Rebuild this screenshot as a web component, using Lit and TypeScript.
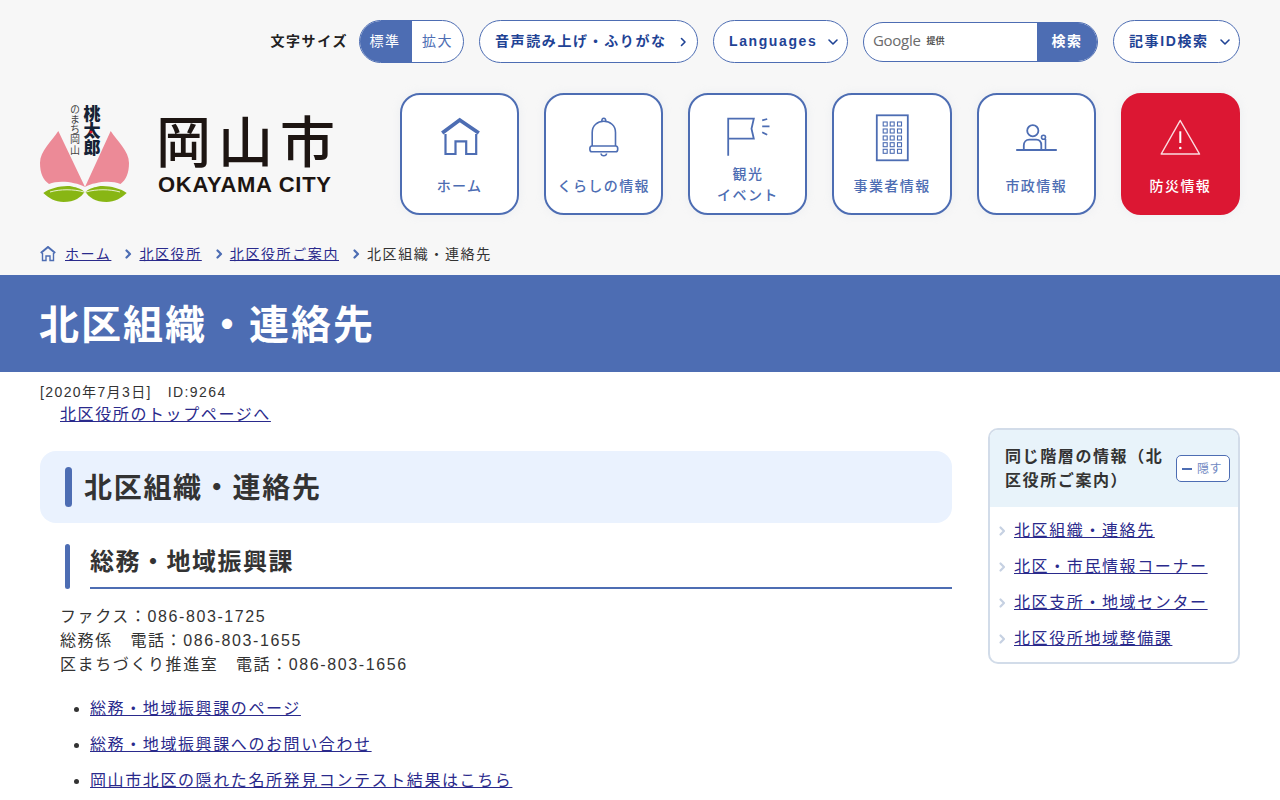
import { LitElement, html, css, svg } from "lit";
import { customElement } from "lit/decorators.js";

const chev = (cls: string, d: string) => html`<svg class=${cls} width="12" height="12" viewBox="0 0 12 12"><path d=${d} fill="none" stroke="currentColor" stroke-width="1.6" stroke-linecap="round" stroke-linejoin="round"/></svg>`;
const chevRight = "M4.500 2.500L8 6 4.500 9.500";
const chevDown = "M2 4l4 4 4-4";

const windows = [11, 18, 25, 31.7, 38.3].flatMap((y) => [23.2, 30.2, 37.5].map((x) => svg`<rect x=${x - 2} y=${y - 2} width="4" height="4"/>`));

const icons: Record<string, unknown> = {
  home: svg`<path d="M12.200 20L29.700 7 48.800 20" stroke-width="3.800" stroke-linejoin="miter"/><path d="M15.500 21v20h10V28.300h10.700V41h10V21" stroke-width="2.200"/>`,
  bell: svg`<path d="M18.200 33V19.500C18.200 12.500 23.500 8.300 29.800 8.300S41.500 12.500 41.500 19.500V33" /><path d="M27.800 8.200c0-4 4-4 4 0"/><path d="M17.800 33h24c2.600 0 2.600 5.800 0 5.800h-24c-2.600 0-2.600-5.800 0-5.800z"/><path d="M27 40.500c.4 3 5.200 3 5.600 0"/>`,
  flag: svg`<path d="M10.200 42.700V5.700H35.800L33.500 15.700 35.800 25.700H10.200" stroke-width="1.800"/><path d="M44.200 7.300L49.200 6M44.200 13.300H51.500M44.200 19.300L49.200 21.700" stroke-width="1.800"/>`,
  building: svg`<rect x="14.800" y="2.300" width="31" height="45" stroke-width="1.800"/><g stroke-width="1.100">${windows}</g>`,
  person: svg`<circle cx="26.800" cy="17.700" r="5.600" stroke-width="1.800"/><path d="M17.800 37V32.500c0-3.500 2.200-5.800 5.500-5.800h7c3.300 0 5 2.300 5 5.800V37" stroke-width="1.800"/><circle cx="37.500" cy="24.300" r="2"/><path d="M39.500 26V37"/><path d="M10.200 37H50.800" stroke-width="2"/>`,
  warn: svg`<path d="M30.200 7.500L49.500 41H11.200Z" stroke-linejoin="round" stroke-width="1.500" opacity="0.85"/><path d="M30.300 18.300V30" stroke-width="2"/><circle cx="30.300" cy="35" r="1.300" fill="currentColor" stroke="none"/>`,
};

const nav = [
  { i: "home", l: ["ホーム"] },
  { i: "bell", l: ["くらしの情報"] },
  { i: "flag", l: ["観光", "イベント"] },
  { i: "building", l: ["事業者情報"] },
  { i: "person", l: ["市政情報"] },
  { i: "warn", l: ["防災情報"], red: true },
];

const side = ["北区組織・連絡先", "北区・市民情報コーナー", "北区支所・地域センター", "北区役所地域整備課"];
const list = ["総務・地域振興課のページ", "総務・地域振興課へのお問い合わせ", "岡山市北区の隠れた名所発見コンテスト結果はこちら"];
const crumbs = ["北区役所", "北区役所ご案内"];

@customElement("app-root")
export class AppRoot extends LitElement {
  static styles = css`
    :host {
      display: block;
      height: 800px;
      overflow: hidden;
      background: #fff;
      color: #333;
      font-family: "Liberation Sans", "Noto Sans CJK JP", sans-serif;
      font-size: 16px;
      letter-spacing: 1.6px;
      line-height: 24px;
    }
    a { color: #2a2a8c; text-decoration: underline; }
    header { background: #f7f7f7; height: 275px; padding: 20px 40px 0; box-sizing: border-box; }
    .tools { display: flex; justify-content: flex-end; align-items: center; gap: 15px; height: 43px; font-size: 14px; }
    .tools .lbl { font-weight: 700; color: #222; margin-right: -4px; padding-bottom: 2px; }
    .toggle { display: flex; width: 105px; height: 43px; box-sizing: border-box; border: 1px solid #4d6db3; border-radius: 22px; overflow: hidden; background: #fff; color: #4d6db3; }
    .toggle span { display: flex; align-items: center; justify-content: center; flex: 1; padding-bottom: 2px; }
    .toggle .on { background: #4d6db3; color: #fff; flex: 0 0 52px; padding-right: 2px; box-sizing: border-box; }
    .pill { display: flex; align-items: center; justify-content: space-between; box-sizing: border-box; height: 43px; border: 1px solid #4d6db3; border-radius: 22px; background: #fff; color: #1f4395; font-weight: 700; padding: 0 8px 0 15px; }
    .pill span { padding-bottom: 2px; }
    .pill svg { flex: none; }
    .p1 { width: 219px; }
    .p2 { width: 135px; }
    .p3 { width: 127px; }
    .search { display: flex; width: 235px; height: 40px; box-sizing: border-box; border: 1px solid #4d6db3; border-radius: 20px; overflow: hidden; background: #fff; }
    .search .g { flex: 1; display: flex; align-items: center; gap: 6px; padding-left: 9px; padding-bottom: 2px; letter-spacing: 0; color: #6b6b6b; }
    .search .g b { font: 400 15px/1 "Open Sans", sans-serif; letter-spacing: -0.3px; }
    .search .g i { font: 700 9px/1 "Noto Sans CJK JP", sans-serif; color: #555; }
    .search .btn { flex: 0 0 60px; background: #4d6db3; color: #fff; font-weight: 700; display: flex; align-items: center; justify-content: center; padding-bottom: 2px; }
    .mid { display: flex; justify-content: space-between; margin-top: 30px; height: 122px; }
    .logo { display: block; overflow: visible; }
    .logo .v { writing-mode: vertical-rl; font-family: "Noto Sans CJK JP", sans-serif; }
    .nav { display: grid; grid-template-columns: repeat(6, 1fr); column-gap: 25px; width: 840px; }
    .card { box-sizing: border-box; display: flex; flex-direction: column; align-items: center; height: 122px; border: 2px solid #4d6db3; border-radius: 20px; background: #fff; color: #4d6db3; box-shadow: 0 0 10px rgba(200, 210, 225, 0.22); font-size: 14px; letter-spacing: 1.4px; line-height: 21px; padding-top: 18px; font-weight: 500; }
    .card.red { background: #dc1733; border-color: #dc1733; color: #fff; }
    .card svg { display: block; flex: none; fill: none; stroke: currentColor; stroke-width: 1.6; }
    .card .lab { height: 42px; margin-top: 2px; display: flex; flex-direction: column; justify-content: center; text-align: center; }
    .card .lab.two { margin-top: 1px; }
    .crumb { display: flex; align-items: center; margin-top: 27px; height: 24px; font-size: 14px; color: #333; }
    .crumb .hm { color: #4d6db3; margin-right: 9px; display: block; }
    .crumb .sep { color: #4d6db3; margin: 0 5px 0 11px; flex: none; stroke-width: 2; }
    .crumb .sep path, .side li svg path { stroke-width: 2.200; }
    .band { background: #4d6db3; color: #fff; height: 97px; padding: 2px 39px 0; box-sizing: border-box; display: flex; align-items: center; font-size: 40px; font-weight: 700; letter-spacing: 2px; line-height: 1.2; }
    .band h1 { margin: 0; font: inherit; }
    .content { padding: 10px 40px 0; }
    .date { font-size: 14px; letter-spacing: 1.4px; line-height: 21px; }
    .top { padding-left: 20px; }
    .cols { display: grid; grid-template-columns: 912px 252px; column-gap: 36px; margin-top: -1px; }
    .main { padding-top: 25px; }
    .h2 { display: flex; align-items: center; gap: 12px; height: 72px; box-sizing: border-box; padding-left: 25px; border-radius: 16px; background: #eaf2fe; font-size: 28px; font-weight: 700; letter-spacing: 1.7px; margin: 0; line-height: 40px; }
    .h2::before { content: ""; width: 7px; height: 40px; border-radius: 4px; background: #4d6db3; }
    .h2 span { padding-top: 3px; }
    .h3 { display: flex; gap: 20px; margin: 21px 0 0 25px; height: 45px; font-size: 24px; font-weight: 700; letter-spacing: 1.5px; }
    .h3::before { content: ""; width: 5px; border-radius: 3px; background: #4d6db3; }
    .h3 span { flex: 1; border-bottom: 2px solid #4d6db3; line-height: 35px; }
    .body { margin: 16px 0 0 20px; }
    ul { margin: 14px 0 0; padding: 0 0 0 50px; }
    li { padding: 6px 0; }
    .side { margin-top: 2px; height: 236px; box-sizing: border-box; border: 2px solid #d2dce9; border-radius: 10px; background: #fff; overflow: hidden; }
    .side .hd { display: flex; align-items: center; justify-content: space-between; height: 77px; box-sizing: border-box; padding: 0 8px 0 15px; background: #e8f3fa; }
    .side .hd b { width: 168px; font-weight: 700; color: #333; }
    .hide { flex: none; box-sizing: border-box; width: 54px; height: 27px; display: flex; align-items: center; gap: 5px; padding-left: 5px; border: 1px solid #4d6db3; border-radius: 5px; background: #fff; color: #6f88c2; font-size: 12px; letter-spacing: 0.6px; }
    .hide::before { content: ""; width: 10px; height: 2px; background: #4d6db3; flex: none; }
    .side ul { list-style: none; margin: 0; padding: 6px 0 0 6px; }
    .side li { display: flex; align-items: center; gap: 6px; }
    .side li svg { color: #c6d1e2; flex: none; }
  `;

  render() {
    return html`
      <header>
        <div class="tools">
          <span class="lbl">文字サイズ</span>
          <div class="toggle"><span class="on">標準</span><span>拡大</span></div>
          <div class="pill p1"><span>音声読み上げ・ふりがな</span>${chev("", chevRight)}</div>
          <div class="pill p2"><span>Languages</span>${chev("", chevDown)}</div>
          <div class="search"><div class="g"><b>Google</b><i>提供</i></div><div class="btn">検索</div></div>
          <div class="pill p3"><span>記事ID検索</span>${chev("", chevDown)}</div>
        </div>
        <div class="mid">
          <svg class="logo" width="300" height="115" viewBox="0 0 300 115" role="img" aria-label="岡山市 OKAYAMA CITY">
            <path d="M18.300 38C12 48 0 58 0 70c0 10 3 17 9 21 10-4 26-2 36 3Z" fill="#ec8a97"/>
            <path d="M70.700 38C77 48 89 58 89 70c0 10-3 17-8.500 21-10-4-26-2-35.500 3Z" fill="#ec8a97"/>
            <path d="M3.300 100C10 95 24 92 32 93.500c5 1 10 2.500 12.500 5.500-3 5-10 10-21 10-8 0-15-4-20.200-9Z" fill="#88b614"/>
            <path d="M86.700 100C80 95 66 92 58 93.500c-5 1-10 2.500-12.500 5.500 3 5 10 10 21 10 8 0 15-4 20.200-9Z" fill="#88b614"/>
            <path d="M10 99c10-3 24-3 34 0M80 99c-10-3-24-3-34 0" fill="none" stroke="#e9f2cf" stroke-width="1"/>
            <text class="v" x="35" y="11" font-size="10" fill="#444" letter-spacing="0.2">のまち岡山</text>
            <text class="v" x="52" y="12" font-size="17" font-weight="900" fill="#152235" letter-spacing="0">桃太郎</text>
            <circle cx="51" cy="39" r="1.500" fill="#e0102a"/>
            <text x="116" y="69" font-family="'Noto Sans CJK JP',sans-serif" font-size="55" font-weight="500" fill="#1d1512" letter-spacing="7">岡山市</text>
            <text x="118" y="99" font-family="'Liberation Sans',sans-serif" font-size="22" font-weight="700" fill="#1d1512" textLength="173" lengthAdjust="spacing" letter-spacing="0">OKAYAMA CITY</text>
          </svg>
          <div class="nav">
            ${nav.map((n) => html`
              <div class="card ${n.red ? "red" : ""}">
                <svg width="60" height="50" viewBox="0 0 60 50">${icons[n.i]}</svg>
                <div class="lab ${n.l.length > 1 ? "two" : ""}">${n.l.map((t) => html`<span>${t}</span>`)}</div>
              </div>`)}
          </div>
        </div>
        <div class="crumb">
          <svg class="hm" width="16" height="16" viewBox="0 0 16 16"><path d="M.8 7L8 1l7.200 6" fill="none" stroke="currentColor" stroke-width="2"/><path d="M2.500 7v7.500h3.500V10h4v4.500h3.500V7" fill="none" stroke="currentColor" stroke-width="1.400"/></svg>
          <a href="#">ホーム</a>
          ${crumbs.map((c) => html`${chev("sep", chevRight)}<a href="#">${c}</a>`)}
          ${chev("sep", chevRight)}<span>北区組織・連絡先</span>
        </div>
      </header>
      <div class="band"><h1>北区組織・連絡先</h1></div>
      <div class="content">
        <div class="date">[2020年7月3日]&nbsp;&nbsp; ID:9264</div>
        <div class="top"><a href="#">北区役所のトップページへ</a></div>
        <div class="cols">
          <div class="main">
            <h2 class="h2"><span>北区組織・連絡先</span></h2>
            <h3 class="h3"><span>総務・地域振興課</span></h3>
            <div class="body">ファクス：086-803-1725<br />総務係　電話：086-803-1655<br />区まちづくり推進室　電話：086-803-1656</div>
            <ul>${list.map((l) => html`<li><a href="#">${l}</a></li>`)}</ul>
          </div>
          <aside class="side">
            <div class="hd"><b>同じ階層の情報（北区役所ご案内）</b><div class="hide">隠す</div></div>
            <ul>${side.map((s) => html`<li>${chev("", chevRight)}<a href="#">${s}</a></li>`)}</ul>
          </aside>
        </div>
      </div>
    `;
  }
}
